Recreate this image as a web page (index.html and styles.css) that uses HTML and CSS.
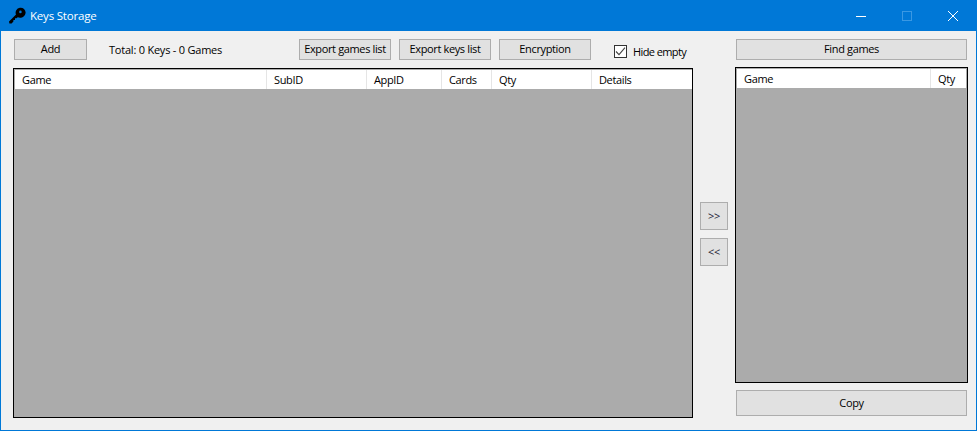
FILE: index.html
```html
<!DOCTYPE html>
<html lang="en">
<head>
<meta charset="utf-8">
<title>Keys Storage</title>
<link rel="stylesheet" href="styles.css">
</head>
<body>
<div class="window">
  <header class="titlebar">
    <svg class="app-icon" width="18" height="18" viewBox="0 0 18 18"><path d="M1 14.5 L8 7.6 A5 5 0 1 1 11 10.4 L9.7 10.2 L8.6 11.3 L7 11.3 L7 13 L5.4 13 L5.4 14.6 L3.6 16.4 L1.4 16.6 Z" fill="#000"/><circle cx="12.4" cy="4.9" r="1.3" fill="#0078d7"/></svg>
    <span class="title">Keys Storage</span>
    <div class="controls">
      <span class="ctl"><svg width="12" height="12" viewBox="0 0 12 12"><path d="M1 6.5H11" stroke="#fff" fill="none"/></svg></span>
      <span class="ctl"><svg width="12" height="12" viewBox="0 0 12 12"><rect x="1.5" y="1.5" width="9" height="9" stroke="#3a98e3" fill="none"/></svg></span>
      <span class="ctl"><svg width="12" height="12" viewBox="0 0 12 12"><path d="M1 1L11 11M11 1L1 11" stroke="#fff" fill="none"/></svg></span>
    </div>
  </header>
  <main class="content">
    <section class="left">
      <div class="toolbar">
        <button class="btn btn-add">Add</button>
        <span class="total">Total: 0 Keys - 0 Games</span>
        <button class="btn btn-tool">Export games list</button>
        <button class="btn btn-tool">Export keys list</button>
        <button class="btn btn-tool">Encryption</button>
        <label class="check">
          <span class="box"><svg width="11" height="11" viewBox="0 0 11 11"><path d="M1 5.5L4 8.7L10 1.6" stroke="#444" stroke-width="1.1" fill="none"/></svg></span>
          Hide empty
        </label>
      </div>
      <div class="list list-main">
        <div class="head">
          <span class="col c-game">Game</span>
          <span class="col c-sub">SubID</span>
          <span class="col c-app">AppID</span>
          <span class="col c-cards">Cards</span>
          <span class="col c-qty">Qty</span>
          <span class="col c-det">Details</span>
        </div>
      </div>
    </section>
    <section class="middle">
      <button class="btn btn-move">&gt;&gt;</button>
      <button class="btn btn-move">&lt;&lt;</button>
    </section>
    <section class="right">
      <button class="btn btn-find">Find games</button>
      <div class="list list-side">
        <div class="head">
          <span class="col c-rgame">Game</span>
          <span class="col c-rqty">Qty</span>
        </div>
      </div>
      <button class="btn btn-copy">Copy</button>
    </section>
  </main>
</div>
</body>
</html>
```
FILE: styles.css
```css
* { box-sizing: border-box; }
html, body { margin: 0; height: 100%; }
body { font-family: "Open Sans", "Noto Sans", sans-serif; font-size: 11px; letter-spacing: -0.36px; color: #000; background: #f0f0f0; overflow: hidden; }
.window { width: 977px; height: 431px; border: 1px solid #0078d7; display: flex; flex-direction: column; background: #f0f0f0; }
.titlebar { height: 30px; flex: none; background: #0078d7; display: flex; align-items: center; padding-left: 7px; color: #fff; }
.app-icon { flex: none; }
.title { margin-left: 4px; margin-bottom: 2px; font-size: 11.5px; letter-spacing: -0.2px; }
.controls { margin-left: auto; display: flex; }
.ctl { width: 46px; height: 30px; display: flex; align-items: center; justify-content: center; }
.content { flex: 1; display: flex; padding: 8px 8px 12px 12px; min-height: 0; }
.left { width: 680px; flex: none; display: flex; flex-direction: column; }
.toolbar { display: flex; height: 21px; padding-left: 1px; margin-bottom: 8px; align-items: center; }
.btn { font: inherit; letter-spacing: inherit; color: #000; background: #e1e1e1; border: 1px solid #adadad; padding: 0 0 2px; height: 21px; border-radius: 0; white-space: nowrap; }
.btn-add { width: 73px; flex: none; }
.total { width: 212px; flex: none; padding-left: 22px; padding-bottom: 1px; white-space: nowrap; letter-spacing: -0.22px; }
.btn-tool { width: 92px; flex: none; margin-right: 8px; }
.check { display: flex; align-items: center; margin-left: 15px; margin-top: 4px; white-space: nowrap; letter-spacing: -0.6px; }
.box { width: 13px; height: 13px; border: 1px solid #333; background: #fff; margin-right: 6px; display: flex; align-items: center; justify-content: center; }
.list { background: #ababab; border: 1px solid #000; flex: 1; }
.head { display: flex; background: #fff; margin: 1px 0 0 1px; height: 19px; align-items: center; }
.col { height: 100%; padding-left: 7px; padding-bottom: 1px; display: flex; align-items: center; border-right: 1px solid #e5e5e5; flex: none; }
.c-game { width: 252px; }
.c-sub { width: 100px; }
.c-app { width: 75px; }
.c-cards { width: 50px; }
.c-qty { width: 100px; }
.c-det { border-right: 0; flex: 1; }
.middle { width: 42px; flex: none; display: flex; flex-direction: column; align-items: center; padding-top: 163px; gap: 8px; }
.btn-move { width: 28px; height: 28px; color: #223; }
.right { width: 233px; flex: none; display: flex; flex-direction: column; }
.btn-find { margin: 0 1px 7px; height: 21px; }
.list-side { flex: none; height: 316px; }
.list-side .head { margin-right: 1px; }
.c-rgame { width: 194px; }
.c-rqty { border-right: 0; flex: 1; }
.btn-copy { margin: 7px 1px 0; height: 26px; }
```
